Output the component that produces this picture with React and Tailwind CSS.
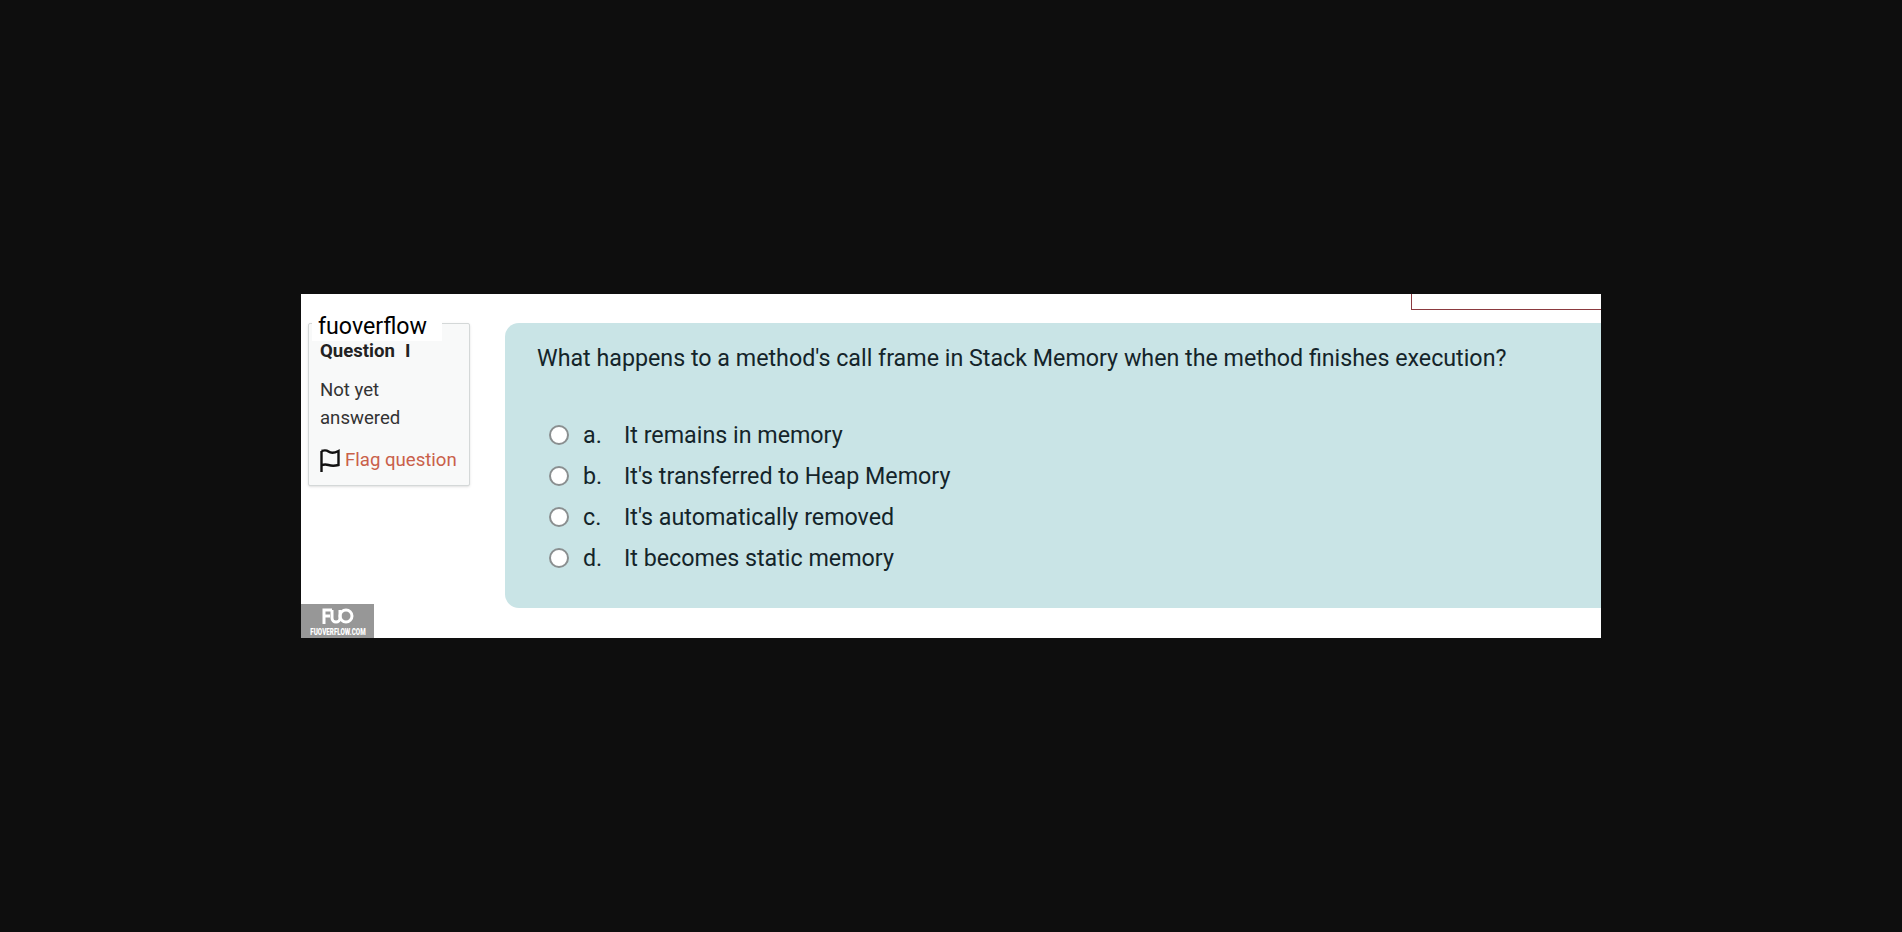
const options = [
  { letter: 'a.', text: 'It remains in memory' },
  { letter: 'b.', text: "It's transferred to Heap Memory" },
  { letter: 'c.', text: "It's automatically removed" },
  { letter: 'd.', text: 'It becomes static memory' },
]

function FlagIcon() {
  return (
    <svg width="22" height="24" viewBox="0 0 22 24" fill="none" stroke="#111" strokeWidth="2.4" className="shrink-0">
      <path d="M2.5 24V3" />
      <path d="M2.5 3c3-1 5-1 7 0.5s6 1.5 10-0.5v14c-4 1-7 1-10 0s-5-0.5-7 0" />
    </svg>
  )
}

function FuoLogo() {
  return (
    <svg width="32" height="16" viewBox="0 0 32 16" fill="none" stroke="#fff" strokeWidth="3">
      <path d="M2 16V2h8" />
      <path d="M2 8h6" />
      <path d="M10 2v8a4 4 0 0 0 8 0V2" />
      <circle cx="24" cy="8" r="6" />
    </svg>
  )
}

function InfoCard() {
  return (
    <div className="relative w-[162px] h-[163px] shrink-0 border border-[#d4d8d8] rounded-[2px] bg-[#f8f9f9] shadow-sm pl-[11px] pt-[16px]">
      {/* Site name sits over the card border */}
      <div className="absolute -top-[12px] left-[3px] bg-white pl-[6px] pr-[15px] h-[29px] text-[23.2px] leading-[29px] text-black">
        fuoverflow
      </div>
      <div className="relative flex items-center gap-[10px] text-[18.6px] leading-[22px] font-bold text-[#222]">
        <span>Question</span>
        <span>I</span>
      </div>
      <div className="mt-[14px] text-[18.6px] leading-[28px] text-[#333]">
        Not yet
        <br />
        answered
      </div>
      <div className="mt-[16px] -ml-[1px] flex items-center gap-[4px] text-[18.6px] leading-[24px] text-[#c9604a] whitespace-nowrap">
        <FlagIcon />
        <span>Flag question</span>
      </div>
    </div>
  )
}

function Question() {
  return (
    <div className="flex-1 h-[285px] rounded-l-[14px] bg-[#c9e4e6] pl-[32px] pt-[20px] text-[#14242a]">
      <p className="text-[23.26px] leading-[31px] whitespace-nowrap">
        What happens to a method's call frame in Stack Memory when the method finishes execution?
      </p>
      <div className="mt-[46px] flex flex-col gap-[11px] pl-[12px]">
        {options.map((o) => (
          <div key={o.letter} className="flex items-center h-[30px] text-[23.26px] leading-[30px]">
            <span className="w-[20px] h-[20px] rounded-full bg-white border-2 border-[#8a8f90] shrink-0" />
            <span className="w-[41px] ml-[14px] shrink-0">{o.letter}</span>
            <span>{o.text}</span>
          </div>
        ))}
      </div>
    </div>
  )
}

export default function App() {
  return (
    <div className="h-[932px] bg-[#0e0e0e] pt-[294px] pl-[301px] font-['Roboto',sans-serif]">
      <div className="relative w-[1300px] h-[344px] bg-white overflow-hidden">
        {/* Box cut off at the top right */}
        <div className="absolute top-0 right-0 w-[190px] h-[16px] border-l border-b border-[#8b3a3f]" />

        <div className="flex pt-[29px] pl-[7px] gap-[35px]">
          <InfoCard />
          <Question />
        </div>

        {/* Watermark */}
        <div className="absolute left-0 bottom-0 w-[73px] h-[34px] bg-[#979797] flex flex-col items-center text-white">
          <div className="mt-[4px]">
            <FuoLogo />
          </div>
          <span className="text-[9.5px] leading-[11px] mt-[2px] font-black whitespace-nowrap scale-x-[0.66]">FUOVERFLOW.COM</span>
        </div>
      </div>
    </div>
  )
}
